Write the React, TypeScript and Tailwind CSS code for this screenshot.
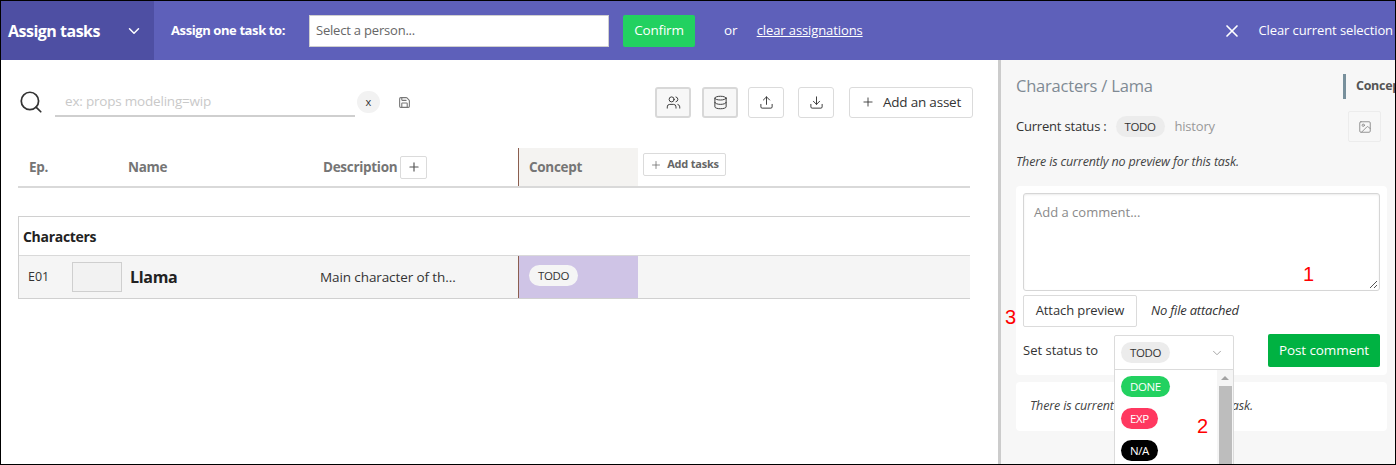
import { ChevronDown, Database, Download, Image, Plus, Save, Search, Upload, Users, X } from 'lucide-react'

function IconButton({ active, children }: { active?: boolean; children: React.ReactNode }) {
  return (
    <button
      className={
        active
          ? 'flex h-[31px] w-[36px] items-center justify-center rounded-[3px] border-2 border-[#d8d8d8] bg-[#f7f7f7] text-[#333]'
          : 'flex h-[31px] w-[36px] items-center justify-center rounded-[3px] border border-[#dbdbdb] bg-white text-[#333]'
      }
    >
      {children}
    </button>
  )
}

function StatusPill({ label, className }: { label: string; className: string }) {
  return (
    <span className={`inline-flex h-[21px] items-center justify-center rounded-[11px] px-[9px] text-[11.5px] tracking-[-0.4px] ${className}`}>
      {label}
    </span>
  )
}

export default function App() {
  return (
    <div className="flex h-[465px] w-[1396px] flex-col overflow-hidden border border-black bg-white font-['Open_Sans','Noto_Sans',sans-serif] text-[#333]">
      {/* Action bar */}
      <div className="flex h-[59px] shrink-0 items-center bg-[#5e60ba] text-white">
        <div className="flex h-full w-[153px] items-center bg-[#4e4fa3] pl-[7px]">
          <span className="w-[117px] text-[16px] font-bold tracking-[-0.5px]">Assign tasks</span>
          <ChevronDown size={18} strokeWidth={2} />
        </div>
        <span className="ml-[17px] w-[138px] text-[13px] font-bold tracking-[-0.4px]">Assign one task to:</span>
        <div className="flex h-[32px] w-[300px] items-center border border-[#cfcfcf] bg-white pl-[6px] text-[13px] tracking-[-0.2px] text-[#666]">
          Select a person...
        </div>
        <button className="ml-[14px] h-[32px] w-[72px] rounded-[2px] bg-[#22d160] text-[13.5px] tracking-[-0.2px]">Confirm</button>
        <span className="ml-[29px] text-[13.5px]">or</span>
        <a className="ml-[19px] text-[13px] tracking-[-0.1px] underline">clear assignations</a>
        <X className="ml-auto" size={20} strokeWidth={2} />
        <span className="ml-[16px] mr-[2px] text-[13px] tracking-[-0.1px]">Clear current selection</span>
      </div>

      <div className="flex min-h-0 flex-1">
        {/* Asset list */}
        <div className="flex w-[997px] shrink-0 flex-col">
          <div className="flex h-[88px] shrink-0 items-center pb-[4px] pl-[17px] pr-[25px]">
            <Search size={26} strokeWidth={1.6} className="text-[#333]" />
            <div className="ml-[11px] flex h-[30px] w-[300px] items-center border-b-2 border-[#cfcfcf] pl-[10px] text-[13.5px] tracking-[-0.2px] text-[#c9c9c9]">
              ex: props modeling=wip
            </div>
            <span className="ml-[2px] flex h-[22px] w-[23px] items-center justify-center rounded-full bg-[#f2f2f2] text-[11px]">x</span>
            <Save size={13} strokeWidth={2} className="ml-[18px] text-[#777]" />
            <div className="ml-auto flex items-center">
              <IconButton active><Users size={15} strokeWidth={1.5} /></IconButton>
              <div className="ml-[11px]"><IconButton active><Database size={15} strokeWidth={1.5} /></IconButton></div>
              <div className="ml-[10px]"><IconButton><Upload size={15} strokeWidth={1.5} /></IconButton></div>
              <div className="ml-[14px]"><IconButton><Download size={15} strokeWidth={1.5} /></IconButton></div>
              <button className="ml-[15px] flex h-[31px] w-[124px] items-center justify-center gap-[8px] rounded-[3px] border border-[#dbdbdb] text-[13.5px] tracking-[-0.2px]">
                <Plus size={14} strokeWidth={1.5} />
                Add an asset
              </button>
            </div>
          </div>

          {/* Header row */}
          <div className="ml-[17px] flex h-[40px] w-[952px] shrink-0 border-b-2 border-[#d9d9d9] text-[13.5px] font-bold tracking-[-0.3px] text-[#757575]">
            <span className="w-[110px] self-center pl-[11px]">Ep.</span>
            <span className="w-[195px] self-center">Name</span>
            <div className="flex w-[195px] items-center gap-[3px]">
              Description
              <span className="flex h-[23px] w-[27px] items-center justify-center rounded-[2px] border border-[#dbdbdb] text-[#555]"><Plus size={14} strokeWidth={2} /></span>
            </div>
            <div className="flex w-[120px] items-center border-l border-[#8b5e4f] bg-[#f4f3f1] pl-[10px]">Concept</div>
            <div className="ml-[5px] mt-[5px] flex h-[23px] w-[83px] items-center justify-center gap-[5px] rounded-[2px] border border-[#dbdbdb] text-[11px] tracking-[-0.2px] text-[#666]">
              <Plus size={12} strokeWidth={1.5} />
              Add tasks
            </div>
          </div>

          {/* Section */}
          <div className="ml-[17px] mt-[28px] w-[952px] border-y border-[#d0d0d0] border-l">
            <div className="flex h-[38px] items-center pl-[4px] text-[14px] font-bold tracking-[-0.3px] text-[#222]">Characters</div>
            <div className="flex h-[43px] items-stretch border-t border-[#d9d9d9] bg-[#f5f5f5]">
              <span className="w-[53px] self-center pl-[9px] text-[12.5px]">E01</span>
              <span className="h-[30px] w-[50px] self-center border border-[#cfcfcf] bg-[#f2f2f2]" />
              <span className="ml-[8px] w-[190px] self-center text-[16px] font-bold tracking-[-0.3px] text-[#222]">Llama</span>
              <span className="w-[198px] self-center truncate pr-[8px] text-[13.5px] tracking-[-0.1px]">Main character of th...</span>
              <div className="flex w-[120px] items-start border-l border-[#8b5e4f] bg-[#cfc4e6] pl-[10px] pt-[9px]">
                <StatusPill label="TODO" className="bg-[#f5f5f5] text-[#333]" />
              </div>
            </div>
          </div>
        </div>

        {/* Task panel */}
        <div className="relative flex min-w-0 flex-1 flex-col border-l-[3px] border-[#cccccc] bg-[#f7f7f7] pl-[15px]">
          <div className="flex h-[51px] shrink-0 items-center justify-between pr-[2px] pt-[2px]">
            <span className="text-[16.5px] tracking-[-0.2px] text-[#7f8a94]">Characters / Lama</span>
            <span className="flex h-[25px] w-[50px] items-center border-l-[3px] border-[#78909c] pl-[10px] text-[12.5px] font-bold tracking-[-0.3px] text-[#555] [width:62px]">Concept</span>
          </div>
          <div className="flex h-[31px] shrink-0 items-center pr-[14px] text-[13px] tracking-[-0.2px]">
            <span>Current status :</span>
            <StatusPill label="TODO" className="ml-[9px] bg-[#ececec] text-[#333]" />
            <span className="ml-[10px] text-[#999]">history</span>
            <span className="ml-auto flex h-[31px] w-[33px] items-center justify-center rounded-[2px] border border-[#ececec] text-[#888]"><Image size={14} strokeWidth={1.5} /></span>
          </div>
          <p className="mt-[11px] text-[12.5px] italic tracking-[-0.15px] text-[#444]">There is currently no preview for this task.</p>
          <div className="mr-[8px] mt-[14px] h-[189px] shrink-0 rounded-[4px] bg-white pl-[7px] pr-[7px] pt-[7px]">
            <div className="relative h-[98px] rounded-[3px] border border-[#d6d6d6] px-[10px] pt-[9px] text-[13px] text-[#8a8a8a] shadow-[inset_0_1px_2px_rgba(0,0,0,0.08)]">
              Add a comment...
              <svg className="absolute bottom-[1px] right-[1px] text-[#555]" width="9" height="9" viewBox="0 0 9 9" fill="none" stroke="currentColor">
                <path d="M1 8 8 1M5 8l3-3" />
              </svg>
            </div>
            <div className="mt-[4px] flex h-[32px] items-center">
              <span className="flex h-[32px] w-[114px] items-center justify-center rounded-[2px] border border-[#dbdbdb] text-[13px] tracking-[-0.1px]">Attach preview</span>
              <span className="ml-[14px] text-[13px] italic tracking-[-0.2px]">No file attached</span>
            </div>
            <div className="mt-[7px] flex h-[33px] items-center justify-between">
              <span className="text-[13px]">Set status to</span>
              <button className="h-[33px] w-[112px] rounded-[2px] bg-[#00b242] text-[13.5px] tracking-[-0.1px] text-white">Post comment</button>
            </div>
          </div>
          <div className="mr-[8px] mt-[7px] flex h-[49px] shrink-0 items-center rounded-[4px] bg-white pl-[14px] text-[12.5px] italic tracking-[-0.15px] text-[#444]">
            There is currently no preview for this task.
          </div>

          {/* Status dropdown, open over the panel */}
          <div className="absolute left-[113px] top-[275px] w-[120px] rounded-[2px] border border-[#dbdbdb] bg-white">
            <div className="flex h-[33px] items-center justify-between pl-[6px] pr-[9px]">
              <StatusPill label="TODO" className="bg-[#ececec] text-[#333]" />
              <ChevronDown size={14} strokeWidth={1.5} className="text-[#999]" />
            </div>
            <div className="flex h-[96px] border-t border-[#dbdbdb]">
              <div className="flex flex-1 flex-col items-start gap-[11px] pl-[6px] pt-[6px]">
                <StatusPill label="DONE" className="bg-[#22d160] text-white" />
                <StatusPill label="EXP" className="bg-[#ff3860] text-white" />
                <StatusPill label="N/A" className="bg-black text-white" />
              </div>
              <div className="flex w-[16px] flex-col items-center bg-[#f5f5f5]">
                <span className="mt-[6px] h-0 w-0 border-x-[4px] border-b-[4px] border-x-transparent border-b-[#a3a3a3]" />
                <span className="mt-[6px] w-[13px] flex-1 bg-[#bdbdbd]" />
              </div>
            </div>
          </div>

          {/* Red annotation numbers */}
          <span className="absolute left-[302px] top-[199px] font-['Liberation_Sans',sans-serif] text-[20px] text-[#ff0000]">1</span>
          <span className="absolute left-[196px] top-[351px] font-['Liberation_Sans',sans-serif] text-[20px] text-[#ff0000]">2</span>
          <span className="absolute left-[4px] top-[242px] font-['Liberation_Sans',sans-serif] text-[20px] text-[#ff0000]">3</span>
        </div>
      </div>
    </div>
  )
}
